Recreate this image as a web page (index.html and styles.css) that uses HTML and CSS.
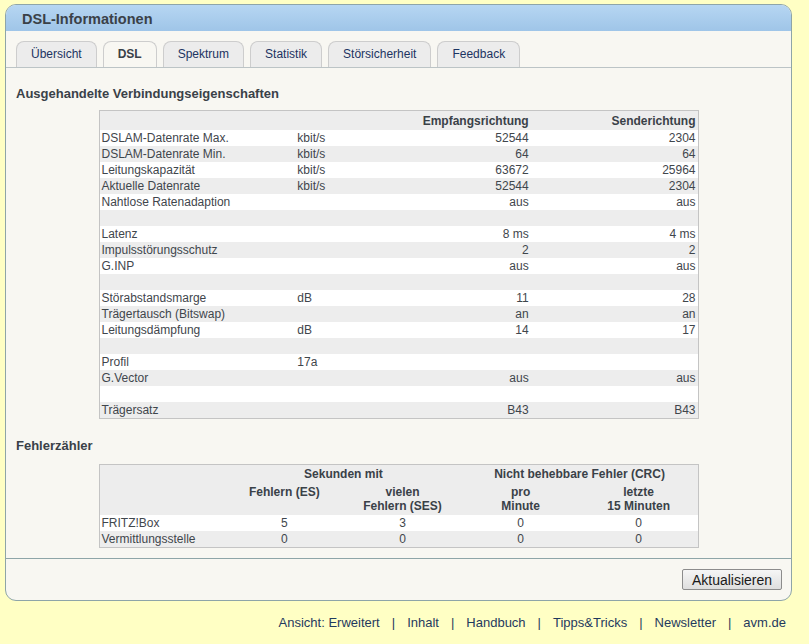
FILE: index.html
```html
<!DOCTYPE html>
<html lang="de">
<head>
<meta charset="utf-8">
<title>DSL-Informationen</title>
<link rel="stylesheet" href="styles.css">
</head>
<body>
<div class="box">
  <div class="box-head">DSL-Informationen</div>
  <div class="tabs">
    <span class="tab">Übersicht</span>
    <span class="tab active">DSL</span>
    <span class="tab">Spektrum</span>
    <span class="tab">Statistik</span>
    <span class="tab">Störsicherheit</span>
    <span class="tab">Feedback</span>
  </div>
  <div class="content">
    <h2 class="h">Ausgehandelte Verbindungseigenschaften</h2>
    <table class="t1">
      <colgroup><col class="c1"><col class="c2"><col class="c3"><col class="c4"></colgroup>
      <thead>
        <tr><th></th><th></th><th class="r">Empfangsrichtung</th><th class="r">Senderichtung</th></tr>
      </thead>
      <tbody>
        <tr><td>DSLAM-Datenrate Max.</td><td>kbit/s</td><td class="r">52544</td><td class="r">2304</td></tr>
        <tr><td>DSLAM-Datenrate Min.</td><td>kbit/s</td><td class="r">64</td><td class="r">64</td></tr>
        <tr><td>Leitungskapazität</td><td>kbit/s</td><td class="r">63672</td><td class="r">25964</td></tr>
        <tr><td>Aktuelle Datenrate</td><td>kbit/s</td><td class="r">52544</td><td class="r">2304</td></tr>
        <tr><td>Nahtlose Ratenadaption</td><td></td><td class="r">aus</td><td class="r">aus</td></tr>
        <tr><td></td><td></td><td></td><td></td></tr>
        <tr><td>Latenz</td><td></td><td class="r">8 ms</td><td class="r">4 ms</td></tr>
        <tr><td>Impulsstörungsschutz</td><td></td><td class="r">2</td><td class="r">2</td></tr>
        <tr><td>G.INP</td><td></td><td class="r">aus</td><td class="r">aus</td></tr>
        <tr><td></td><td></td><td></td><td></td></tr>
        <tr><td>Störabstandsmarge</td><td>dB</td><td class="r">11</td><td class="r">28</td></tr>
        <tr><td>Trägertausch (Bitswap)</td><td></td><td class="r">an</td><td class="r">an</td></tr>
        <tr><td>Leitungsdämpfung</td><td>dB</td><td class="r">14</td><td class="r">17</td></tr>
        <tr><td></td><td></td><td></td><td></td></tr>
        <tr><td>Profil</td><td>17a</td><td></td><td></td></tr>
        <tr><td>G.Vector</td><td></td><td class="r">aus</td><td class="r">aus</td></tr>
        <tr><td></td><td></td><td></td><td></td></tr>
        <tr><td>Trägersatz</td><td></td><td class="r">B43</td><td class="r">B43</td></tr>
      </tbody>
    </table>
    <h2 class="h h2">Fehlerzähler</h2>
    <table class="t2">
      <colgroup><col class="d1"><col class="d2"><col class="d2"><col class="d2"><col class="d2"></colgroup>
      <thead>
        <tr class="hr1"><th></th><th colspan="2">Sekunden mit</th><th colspan="2">Nicht behebbare Fehler (CRC)</th></tr>
        <tr class="hr2"><th></th><th>Fehlern (ES)</th><th>vielen<br>Fehlern (SES)</th><th>pro<br>Minute</th><th>letzte<br>15 Minuten</th></tr>
      </thead>
      <tbody>
        <tr><td class="l">FRITZ!Box</td><td>5</td><td>3</td><td>0</td><td>0</td></tr>
        <tr><td class="l">Vermittlungsstelle</td><td>0</td><td>0</td><td>0</td><td>0</td></tr>
      </tbody>
    </table>
  </div>
  <div class="actions">
    <button class="btn" type="button">Aktualisieren</button>
  </div>
</div>
<div class="footer">
  <a>Ansicht: Erweitert</a><span class="sep">|</span><a>Inhalt</a><span class="sep">|</span><a>Handbuch</a><span class="sep">|</span><a>Tipps&amp;Tricks</a><span class="sep">|</span><a>Newsletter</a><span class="sep">|</span><a>avm.de</a>
</div>
</body>
</html>
```

FILE: styles.css
```css
html, body {
  margin: 0;
  padding: 0;
}
body {
  background: #ffffc4;
  font-family: "Liberation Sans", Arial, sans-serif;
  color: #3f464c;
  font-size: 12px;
}
.box {
  margin: 4px 0 0 5px;
  width: 787px;
  box-sizing: border-box;
  border: 1px solid #8ea5a8;
  border-radius: 11px;
  background: #f8f7f2;
  overflow: hidden;
}
.box-head {
  height: 26px;
  line-height: 28px;
  padding-left: 16px;
  font-size: 14.5px;
  font-weight: bold;
  color: #3a4148;
  background: linear-gradient(#b6d6f2, #9fc5e8);
}
.tabs {
  display: flex;
  padding: 10px 0 0 10px;
  border-bottom: 1px solid #bcc4c6;
}
.tab {
  height: 25px;
  line-height: 25px;
  padding: 0 14px;
  margin-right: 6px;
  border: 1px solid #cdcdcd;
  border-bottom: none;
  border-radius: 8px 8px 0 0;
  background: #ececec;
  color: #1c3462;
  font-size: 12px;
}
.tab.active {
  background: #f8f7f2;
  font-weight: bold;
  color: #3a4148;
}
.content {
  padding: 18px 0 10px 0;
  border-bottom: 1px solid #8ea5a8;
}
.h {
  margin: 0 0 8px 10px;
  font-size: 13px;
  line-height: 16px;
  font-weight: bold;
  color: #3a4148;
}
.h2 {
  margin-top: 19px;
  margin-bottom: 10px;
}
table {
  border-collapse: collapse;
  table-layout: fixed;
  width: 600px;
  margin: 0 auto;
  border: 1px solid #c4c4c4;
  font-size: 12px;
}
td, th {
  padding: 0 2px;
  white-space: nowrap;
  overflow: hidden;
}
.t1 col.c1 { width: 196px; }
.t1 col.c2 { width: 100px; }
.t1 col.c3 { width: 135px; }
.t1 col.c4 { width: 167px; }
.t1 th {
  height: 19px;
  background: #ededed;
  font-weight: bold;
  text-align: left;
  color: #3a4148;
}
.t1 td {
  height: 16px;
  line-height: 16px;
}
.t1 tbody tr:nth-child(odd) { background: #ffffff; }
.t1 tbody tr:nth-child(even) { background: #ededed; }
.r { text-align: right; }
.t1 th.r { text-align: right; }

.t2 col.d1 { width: 126px; }
.t2 col.d2 { width: 118px; }
.t2 thead tr { background: #ededed; }
.t2 th {
  font-weight: bold;
  text-align: center;
  color: #3a4148;
  vertical-align: top;
  line-height: 14px;
}
.t2 .hr1 th { height: 17px; vertical-align: middle; }
.t2 .hr2 th { height: 30px; padding-top: 3px; }
.t2 td {
  height: 16px;
  line-height: 16px;
  text-align: center;
}
.t2 td.l { text-align: left; }
.t2 tbody tr:nth-child(odd) { background: #ffffff; }
.t2 tbody tr:nth-child(even) { background: #ededed; }

.actions {
  display: flex;
  justify-content: flex-end;
  padding: 10px 9px 10px 0;
}
.btn {
  height: 21px;
  width: 100px;
  padding: 0;
  border: 1px solid #8c8c8c;
  border-radius: 2px;
  background: linear-gradient(#f6f6f6, #dedede);
  font-family: "Liberation Sans", Arial, sans-serif;
  font-size: 14px;
  color: #1a1a1a;
}
.footer {
  display: flex;
  justify-content: flex-end;
  margin-top: 14px;
  padding-right: 23px;
  font-size: 13px;
  line-height: 16px;
  color: #1f3a5e;
}
.footer a { color: #1f3a5e; }
.sep {
  margin: 0 12px;
  color: #1f3a5e;
}
```
